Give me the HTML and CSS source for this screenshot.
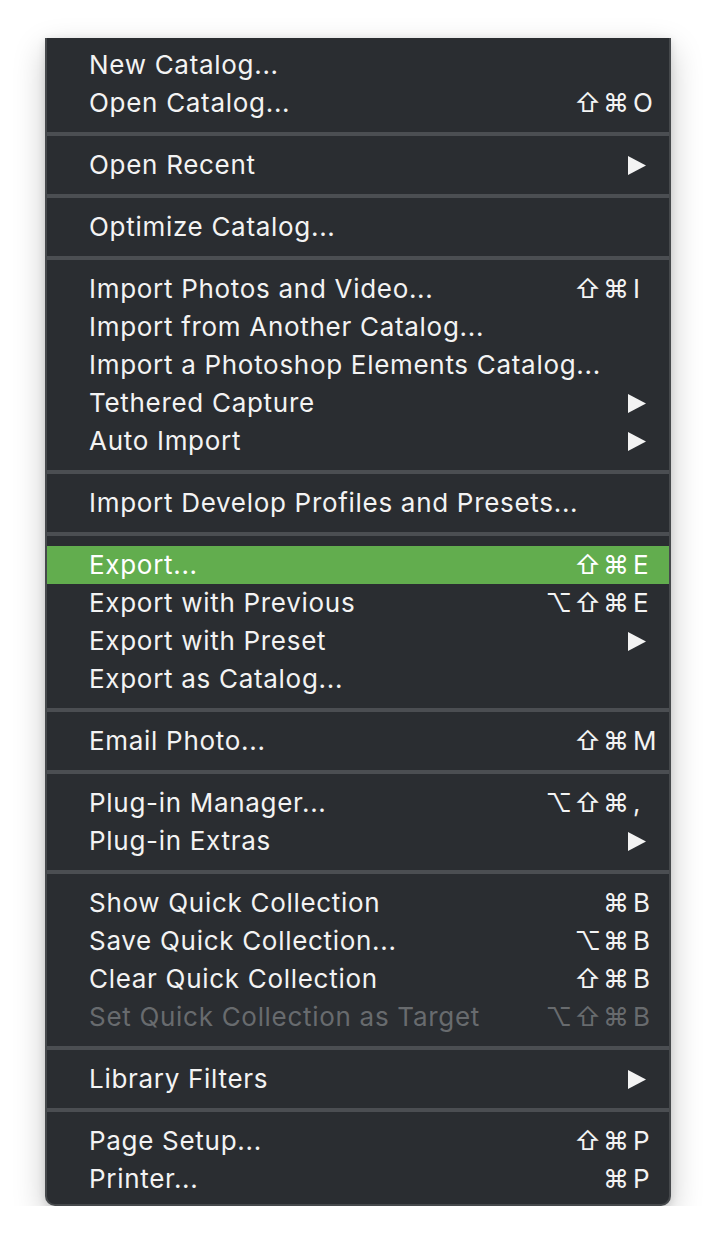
FILE: index.html
```html
<!DOCTYPE html>
<html>
<head>
<meta charset="utf-8">
<link rel="stylesheet" href="styles.css">
</head>
<body>
<div class="menu">
  <div class="item"><span class="label">New Catalog...</span></div>
  <div class="item"><span class="label">Open Catalog...</span><span class="sc"><span class="mods">⇧⌘</span><span class="key">O</span></span></div>
  <div class="sep"></div>
  <div class="item"><span class="label">Open Recent</span><svg class="arrow" viewBox="0 0 18 19"><polygon points="0,0 18,9.5 0,19"/></svg></div>
  <div class="sep"></div>
  <div class="item"><span class="label">Optimize Catalog...</span></div>
  <div class="sep"></div>
  <div class="item"><span class="label">Import Photos and Video...</span><span class="sc"><span class="mods">⇧⌘</span><span class="key">I</span></span></div>
  <div class="item"><span class="label">Import from Another Catalog...</span></div>
  <div class="item"><span class="label">Import a Photoshop Elements Catalog...</span></div>
  <div class="item"><span class="label">Tethered Capture</span><svg class="arrow" viewBox="0 0 18 19"><polygon points="0,0 18,9.5 0,19"/></svg></div>
  <div class="item"><span class="label">Auto Import</span><svg class="arrow" viewBox="0 0 18 19"><polygon points="0,0 18,9.5 0,19"/></svg></div>
  <div class="sep"></div>
  <div class="item"><span class="label">Import Develop Profiles and Presets...</span></div>
  <div class="sep"></div>
  <div class="item active"><span class="label">Export...</span><span class="sc"><span class="mods">⇧⌘</span><span class="key">E</span></span></div>
  <div class="item"><span class="label">Export with Previous</span><span class="sc"><span class="mods">⌥⇧⌘</span><span class="key">E</span></span></div>
  <div class="item"><span class="label">Export with Preset</span><svg class="arrow" viewBox="0 0 18 19"><polygon points="0,0 18,9.5 0,19"/></svg></div>
  <div class="item"><span class="label">Export as Catalog...</span></div>
  <div class="sep"></div>
  <div class="item"><span class="label">Email Photo...</span><span class="sc"><span class="mods">⇧⌘</span><span class="key">M</span></span></div>
  <div class="sep"></div>
  <div class="item"><span class="label">Plug-in Manager...</span><span class="sc"><span class="mods">⌥⇧⌘</span><span class="key">,</span></span></div>
  <div class="item"><span class="label">Plug-in Extras</span><svg class="arrow" viewBox="0 0 18 19"><polygon points="0,0 18,9.5 0,19"/></svg></div>
  <div class="sep"></div>
  <div class="item"><span class="label">Show Quick Collection</span><span class="sc"><span class="mods">⌘</span><span class="key">B</span></span></div>
  <div class="item"><span class="label">Save Quick Collection...</span><span class="sc"><span class="mods">⌥⌘</span><span class="key">B</span></span></div>
  <div class="item"><span class="label">Clear Quick Collection</span><span class="sc"><span class="mods">⇧⌘</span><span class="key">B</span></span></div>
  <div class="item disabled"><span class="label">Set Quick Collection as Target</span><span class="sc"><span class="mods">⌥⇧⌘</span><span class="key">B</span></span></div>
  <div class="sep"></div>
  <div class="item"><span class="label">Library Filters</span><svg class="arrow" viewBox="0 0 18 19"><polygon points="0,0 18,9.5 0,19"/></svg></div>
  <div class="sep"></div>
  <div class="item"><span class="label">Page Setup...</span><span class="sc"><span class="mods">⇧⌘</span><span class="key">P</span></span></div>
  <div class="item"><span class="label">Printer...</span><span class="sc"><span class="mods">⌘</span><span class="key">P</span></span></div>
</div>
</body>
</html>
```

FILE: styles.css
```css
html, body {
  margin: 0;
  padding: 0;
  background: #ffffff;
}

body {
  font-family: Inter, "Noto Sans", sans-serif;
}

.menu {
  box-sizing: border-box;
  width: 626px;
  margin: 38px 0 0 45px;
  padding: 8px 0 6px;
  background: #2a2d31;
  border: 2px solid #46494c;
  border-top: none;
  border-radius: 0 0 10px 10px;
  box-shadow: 0 12px 32px rgba(0, 0, 0, 0.22), 0 2px 8px rgba(0, 0, 0, 0.12);
}

.item {
  display: flex;
  align-items: center;
  box-sizing: border-box;
  height: 38px;
  padding: 0 16px 2px 42px;
  color: #f3f3f3;
  font-size: 26px;
  letter-spacing: 0.7px;
  white-space: nowrap;
}

.item.active {
  background: #62ad4e;
  color: #ffffff;
}

.item.disabled {
  color: #686b6e;
}

.label {
  flex: 1;
}

.sc {
  display: flex;
  align-items: center;
}

.mods {
  font-family: Inter, sans-serif;
  font-size: 26px;
  letter-spacing: 2px;
}

.key {
  width: 20px;
  margin-left: 2px;
  letter-spacing: 0;
}

.arrow {
  width: 18px;
  height: 19px;
  margin: 2px 7px 0 0;
  fill: #f3f3f3;
}

.sep {
  height: 4px;
  margin: 10px 0;
  background: #4b4e52;
}
```
